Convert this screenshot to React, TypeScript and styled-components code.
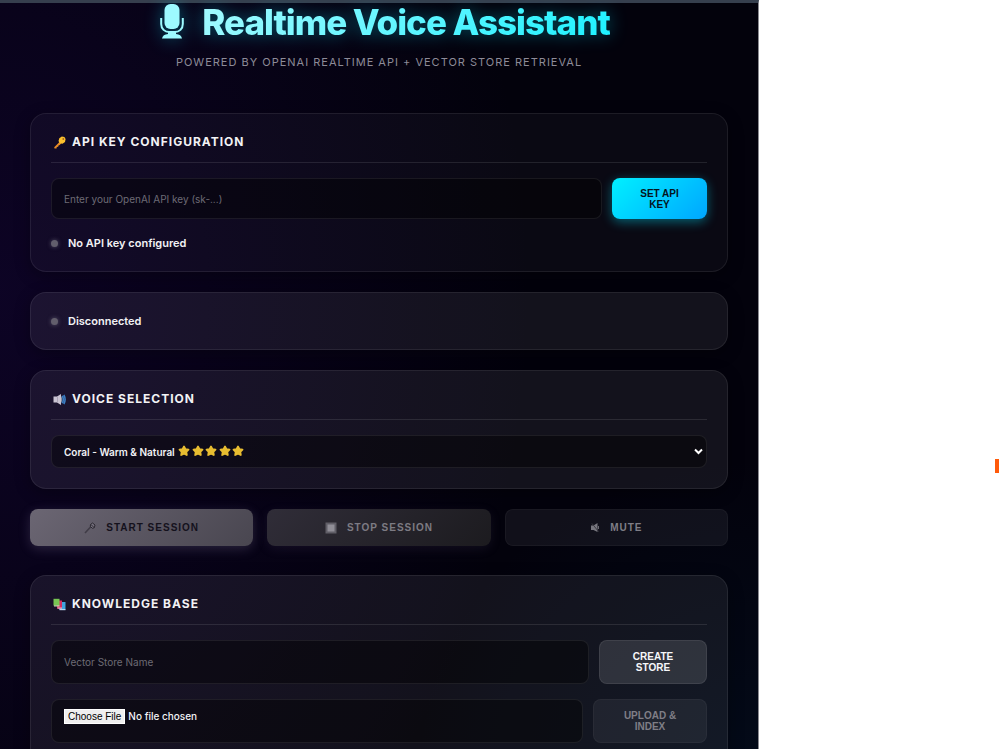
import React from "react";
import styled, { createGlobalStyle, css } from "styled-components";

const GlobalStyle = createGlobalStyle`
  *, *::before, *::after { box-sizing: border-box; }
  html, body, #root { height: 100%; }
  body {
    margin: 0;
    overflow: hidden;
    background: #ffffff;
    color: #f2f2f5;
    font-family: Inter, "Liberation Sans", sans-serif;
    font-size: 11px;
  }
`;

const Page = styled.div`
  position: relative;
  height: 100vh;
  overflow: hidden;
`;

const Assistant = styled.main`
  width: 75.9%;
  min-height: 100%;
  padding: 0 30px;
  border-top: 3px solid #363f4e;
  border-right: 1px solid #8a8a90;
  background:
    radial-gradient(ellipse 70% 95% at 0% 38%, rgba(42, 8, 110, 0.25) 0%, transparent 100%),
    radial-gradient(ellipse 45% 40% at 100% 100%, rgba(0, 60, 100, 0.14) 0%, transparent 100%),
    #03020c;
`;

const Header = styled.header`
  display: flex;
  flex-direction: column;
  align-items: center;
  gap: 12px;
  padding-bottom: 42px;
`;

const Title = styled.h1`
  display: flex;
  align-items: center;
  gap: 18px;
  margin: 0;
  padding-left: 12px;
  font-size: 35px;
  line-height: 38px;
  font-weight: 800;
  letter-spacing: -1px;
  white-space: nowrap;
  filter: drop-shadow(0 0 9px rgba(0, 229, 255, 0.4));
`;

const TitleText = styled.span`
  background: linear-gradient(135deg, #a4faff 0%, #1cf1ff 100%);
  background-clip: text;
  -webkit-background-clip: text;
  color: transparent;
`;

const Tagline = styled.p`
  margin: 0;
  font-size: 11px;
  line-height: 18px;
  letter-spacing: 1px;
  text-transform: uppercase;
  color: #8d8b98;
`;

const Card = styled.section<{ $dim?: boolean }>`
  margin-bottom: 20px;
  padding: 20px;
  border: 1px solid rgba(255, 255, 255, 0.08);
  border-radius: 16px;
  background: rgba(255, 255, 255, ${(p) => (p.$dim ? 0.03 : 0.065)});
  box-shadow: 0 4px 16px rgba(0, 0, 0, 0.3);
`;

const CardTitle = styled.h2`
  display: flex;
  align-items: center;
  gap: 6px;
  margin: 0 0 15px;
  padding: 0 0 12px 2px;
  border-bottom: 1px solid rgba(255, 255, 255, 0.1);
  font-size: 12px;
  line-height: 16px;
  font-weight: 700;
  letter-spacing: 1px;
  text-transform: uppercase;
`;

const FieldRow = styled.div`
  display: flex;
  gap: 10px;
  & + & { margin-top: 15px; }
`;

const field = css`
  min-width: 0;
  border: 1px solid rgba(255, 255, 255, 0.08);
  border-radius: 8px;
  background: rgba(0, 0, 0, 0.4);
  color: #f2f2f5;
  font-family: inherit;
  font-size: 10px;
`;

const TextField = styled.input`
  ${field}
  flex: 1;
  padding: 0 12px;
  &::placeholder { color: #6d6b75; opacity: 1; }
`;

const FileField = styled.input`
  ${field}
  flex: 1;
  padding: 9px 12px;
  font-weight: 500;
  line-height: 14px;
  &::file-selector-button {
    margin: 0 3px 0 0;
    padding: 0 3px;
    border: 1px solid #ffffff;
    border-radius: 0;
    background: #efefef;
    color: #000000;
    font-family: "Liberation Sans", Arial, sans-serif;
    font-size: 10px;
    line-height: 13px;
  }
`;

const SelectBox = styled.div`
  position: relative;
`;

const Select = styled.select`
  ${field}
  display: block;
  width: 100%;
  height: 33px;
  padding: 0 12px;
  appearance: none;
  font-weight: 600;
`;

const Rating = styled.span`
  position: absolute;
  top: 10px;
  left: 127px;
  display: flex;
  justify-content: space-between;
  width: 66px;
  pointer-events: none;
`;

const Arrow = styled.span`
  position: absolute;
  top: 13px;
  right: 4px;
  display: flex;
  pointer-events: none;
`;

const Status = styled.p`
  display: flex;
  align-items: center;
  gap: 10px;
  margin: 0;
  font-size: 11px;
  line-height: 16px;
  font-weight: 600;
  ${FieldRow} + & { margin-top: 16px; }
`;

const Dot = styled.i`
  width: 7px;
  height: 7px;
  border-radius: 50%;
  background: #625e6c;
  box-shadow: 0 0 4px rgba(150, 145, 165, 0.5);
`;

type Tone = "accent" | "start" | "stop" | "ghost" | "plain";

const tones = {
  accent: css`
    background: linear-gradient(135deg, #00f0ff 0%, #00a6ff 100%);
    color: #05141c;
    box-shadow: 0 3px 11px rgba(0, 229, 255, 0.4);
  `,
  start: css`
    background: linear-gradient(135deg, #6b6673 0%, #494650 100%);
    color: #14111c;
    box-shadow: 0 3px 12px rgba(160, 150, 190, 0.22);
  `,
  stop: css`
    background: linear-gradient(135deg, #302d38 0%, #1c1b1f 100%);
    color: #7d7b83;
    box-shadow: 0 3px 12px rgba(120, 110, 150, 0.12);
  `,
  ghost: css`
    background: rgba(255, 255, 255, 0.06);
    border-color: rgba(255, 255, 255, 0.04);
    color: #7f7e86;
  `,
  plain: css`
    background: rgba(255, 255, 255, 0.12);
    border-color: rgba(255, 255, 255, 0.08);
    color: #f7f7f9;
  `,
};

const Button = styled.button<{ $tone: Tone; $basis?: number; $height: number }>`
  display: flex;
  align-items: center;
  justify-content: center;
  gap: 10px;
  flex: ${(p) => (p.$basis ? `0 0 ${p.$basis}px` : "1 1 0")};
  height: ${(p) => p.$height}px;
  padding: 0 20px;
  border: 1px solid transparent;
  border-radius: 8px;
  background-origin: border-box !important;
  font-family: "Liberation Sans", Arial, sans-serif;
  font-size: 10px;
  line-height: 11px;
  font-weight: 700;
  letter-spacing: ${(p) => (p.$basis ? "0" : "1px")};
  text-transform: uppercase;
  ${(p) => tones[p.$tone]}
`;

const Controls = styled.div`
  display: flex;
  gap: 14px;
  margin-bottom: 29px;
`;

const EdgeMarker = styled.span`
  position: absolute;
  top: 459px;
  right: 1px;
  width: 4px;
  height: 14px;
  background: #ff5a0a;
`;

const MicIcon = () => (
  <svg width="24" height="36" viewBox="0 0 24 36" aria-hidden="true">
    <rect x="4.500" y="0" width="15" height="25" rx="6" fill="#9dfaff" />
    <path d="M1.200 14v6c0 5 3.600 8 8 8h5.600c4.400 0 8-3 8-8v-6" fill="none" stroke="#9dfaff" strokeWidth="2" />
    <path d="M8 28h8v2c3.500.4 5.500 1.700 6 4.500H2c.5-2.800 2.500-4.100 6-4.500z" fill="#9dfaff" />
  </svg>
);

const KeyIcon = () => (
  <svg width="13" height="13" viewBox="0 0 13 13" aria-hidden="true">
    <path d="M7 5.500 1.200 11.200 1.500 12.500h2l.3-1.500 1.400-.2.300-1.400 1.300-.3 1.700-2z" fill="#e88a25" />
    <path d="M6.300 2.200 8.800.6l2.600.4 1.200 2-.6 3-2.500 1.700-2.700-.4-1.300-2.200z" fill="#fbc02d" />
    <circle cx="10.300" cy="3" r=".9" fill="#a8631c" />
  </svg>
);

const SpeakerIcon = () => (
  <svg width="13" height="13" viewBox="0 0 13 13" aria-hidden="true">
    <path d="M.5 3.500h3.500L8 1v11L4 9.500H.5z" fill="#c9c3d2" />
    <path d="M4.500 3.500v6" stroke="#aaa3b5" />
    <path d="M8 3q2.500 3.500 0 7z" fill="#8d93a3" />
    <path d="M9.200 2.800q2.200 3.700 0 7.400M10.800 2q2.600 4.500 0 9" fill="none" stroke="#3c7fc4" strokeWidth="1.600" />
  </svg>
);

const BooksIcon = () => (
  <svg width="13" height="13" viewBox="0 0 13 13" aria-hidden="true">
    <path d="M6 4h6.500v7.500H6z" fill="#3fa4df" />
    <path d="M6.500 11h6v1.200h-6z" fill="#b7d6ef" />
    <path d="M4 2.500h5v8H4z" fill="#d62e62" />
    <path d="M4.500 9.500h4.500v1.200H4.500z" fill="#edb6c8" />
    <path d="M.5.800h6v6.800h-6z" fill="#77c653" />
    <path d="M1 7.300h5.500v1.200H1z" fill="#c4dfb5" />
  </svg>
);

const StarIcon = () => (
  <svg width="12" height="12" viewBox="0 0 12 12" aria-hidden="true">
    <path d="M6 1.500 7.500 4.100l3 .5-2.200 2.300.5 3.100L6 8.700 3.200 10l.5-3.100L1.500 4.600l3-.5z" fill="#e8bd31" stroke="#e8bd31" strokeWidth="1.800" strokeLinejoin="round" />
  </svg>
);

const ArrowIcon = () => (
  <svg width="9" height="7" viewBox="0 0 9 7" aria-hidden="true">
    <path d="M1 1.500l3.500 3.500L8 1.500" fill="none" stroke="#ffffff" strokeWidth="2" />
  </svg>
);

const HandMicIcon = () => (
  <svg width="12" height="12" viewBox="0 0 12 12" aria-hidden="true">
    <path d="M1 11l6-6.500" stroke="#403c47" strokeWidth="1.600" />
    <path d="M6.500 2.500 8.500 1l2.500 2-.7 2.700-2 .6-2-2z" fill="#77727f" stroke="#2a2730" strokeWidth="1" />
    <path d="M7 2.500l3 3" stroke="#2a2730" strokeWidth="1" />
  </svg>
);

const StopIcon = () => (
  <svg width="12" height="12" viewBox="0 0 12 12" aria-hidden="true">
    <rect x=".5" y=".5" width="11" height="11" fill="#605e67" />
    <rect x="2.500" y="2.500" width="7" height="7" fill="#908e97" />
  </svg>
);

const MutedIcon = () => (
  <svg width="10" height="11" viewBox="0 0 10 11" aria-hidden="true">
    <path d="M1 3.500h2.500L7.500 1v9L3.500 8H1z" fill="#77767e" />
    <path d="M2 1.500l6.500 8" stroke="#3a3941" strokeWidth="1" />
    <path d="M8.500 4v3" stroke="#6a6971" strokeWidth="1" />
  </svg>
);

export default function App() {
  return (
    <Page>
      <GlobalStyle />
      <Assistant>
        <Header>
          <Title>
            <MicIcon />
            <TitleText>Realtime Voice Assistant</TitleText>
          </Title>
          <Tagline>Powered by OpenAI Realtime API + Vector Store Retrieval</Tagline>
        </Header>

        <Card $dim>
          <CardTitle><KeyIcon />API Key Configuration</CardTitle>
          <FieldRow>
            <TextField type="password" aria-label="OpenAI API key" placeholder="Enter your OpenAI API key (sk-...)" />
            <Button type="button" $tone="accent" $basis={95} $height={41}>Set API Key</Button>
          </FieldRow>
          <Status><Dot />No API key configured</Status>
        </Card>

        <Card>
          <Status><Dot />Disconnected</Status>
        </Card>

        <Card>
          <CardTitle><SpeakerIcon />Voice Selection</CardTitle>
          <SelectBox>
            <Select aria-label="Voice">
              <option>Coral - Warm &amp; Natural</option>
            </Select>
            <Rating>
              {[1, 2, 3, 4, 5].map((n) => <StarIcon key={n} />)}
            </Rating>
            <Arrow><ArrowIcon /></Arrow>
          </SelectBox>
        </Card>

        <Controls>
          <Button type="button" $tone="start" $height={37}><HandMicIcon />Start Session</Button>
          <Button type="button" $tone="stop" $height={37}><StopIcon />Stop Session</Button>
          <Button type="button" $tone="ghost" $height={37}><MutedIcon />Mute</Button>
        </Controls>

        <Card>
          <CardTitle><BooksIcon />Knowledge Base</CardTitle>
          <FieldRow>
            <TextField type="text" aria-label="Vector store name" placeholder="Vector Store Name" />
            <Button type="button" $tone="plain" $basis={108} $height={44}>Create Store</Button>
          </FieldRow>
          <FieldRow>
            <FileField type="file" aria-label="Document to index" />
            <Button type="button" $tone="ghost" $basis={114} $height={44}>Upload &amp; Index</Button>
          </FieldRow>
        </Card>
      </Assistant>
      <EdgeMarker />
    </Page>
  );
}
